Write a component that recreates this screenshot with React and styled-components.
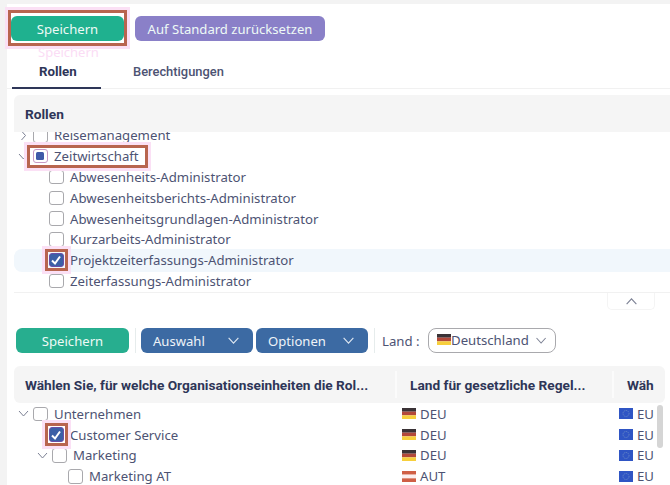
import React from 'react';
import styled, { createGlobalStyle } from 'styled-components';

const Global = createGlobalStyle`
  html, body { margin: 0; padding: 0; background: #f3f3f3; }
  * { box-sizing: border-box; }
`;
const Page = styled.div`
  width: 670px; height: 485px; overflow: hidden; background: #f3f3f3;
  padding: 4px 0 0 7px; font-family: "Noto Sans", sans-serif; font-size: 13.2px; color: #4d5373;
`;
const Panel = styled.div`
  height: 481px; background: #fff; display: flex; flex-direction: column;
`;
const TopBar = styled.div`
  display: flex; gap: 11px; padding: 12px 0 0 4px; height: 37px;
`;
const Button = styled.button`
  height: 25px; width: ${p => p.$w}px; border: 0; border-radius: 6px; padding: 0;
  background: ${p => p.$bg}; color: #eefaf6; font: 13.1px "Noto Sans", sans-serif;
  display: flex; align-items: center; justify-content: center; flex: none;
`;
const Mark = styled.div`
  position: relative; flex: none; display: flex; align-items: center; gap: ${p => p.$gap || 0}px;
  &::after {
    content: ''; position: absolute; inset: ${p => p.$inset};
    border: 3px solid #b8654f; box-shadow: 0 0 0 3px #fbe0f5; pointer-events: none;
  }
`;
const Ghost = styled.div`
  height: 13px; padding: 5px 0 0 31px; font-size: 13px; line-height: 13px; color: #fbdcf5;
`;
const Tabs = styled.div`
  display: flex; height: 31px; margin-top: 4px; border-bottom: 1px solid #f1f1f1; position: relative;
`;
const Tab = styled.div`
  position: relative; flex: none; width: ${p => p.$w}px; padding-left: ${p => p.$pl}px; line-height: 28px;
  margin-left: ${p => p.$ml || 0}px;
  font-family: Roboto, sans-serif; font-weight: ${p => p.$on ? 700 : 500};
  font-size: ${p => p.$on ? 13.3 : 12.9}px; color: ${p => p.$on ? '#2e3658' : '#4d5373'};
  ${p => p.$on && `&::after { content: ''; position: absolute; left: 0; right: 0; bottom: -1px; height: 2px; background: #2e3658; }`}
`;
const RolesBox = styled.div`
  margin: 6px 0 0 7px; display: flex; flex-direction: column; position: relative;
`;
const HeadCell = styled.div`
  height: 37px; background: #f5f5f5; flex: none; position: relative; z-index: 1; border-radius: 6px 0 0 0;
  padding-left: 11px; font: 700 13.7px/39px Roboto, sans-serif; color: #2e3658;
`;
const Tree = styled.div`
  height: 161px; overflow: hidden; border-bottom: 1px solid #f1f1f1;
`;
const TreeInner = styled.div`
  margin-top: -7px;
`;
const Row = styled.div`
  display: flex; align-items: center; height: 20.8px; padding-left: ${p => p.$pl}px; gap: 6.5px;
  white-space: nowrap;
  ${p => p.$hi && 'background: #f1f7fc; box-shadow: 0 -1px 0 #f1f7fc, 0 1px 0 #f1f7fc; border-radius: 8px 0 0 8px;'}
`;
const Caret = styled.svg`
  width: 11px; height: 11px; flex: none; margin-right: -2.5px; fill: none; stroke: #7c8194; stroke-width: 1;
`;
const Box = styled.span`
  width: 14.5px; height: 14.5px; flex: none; border: 1px solid #a9a9ad; border-radius: 3px; background: #fff;
  display: flex; align-items: center; justify-content: center;
  ${p => p.$state === 'checked' && 'background: #3b5fa6; border-color: #6a4fa8;'}
  ${p => p.$state === 'partial' && 'border-color: #c79ac4;'}
`;
const Dot = styled.span`
  width: 8px; height: 8px; border-radius: 1.5px; background: #3f5aa8;
`;
const Collapse = styled.div`
  align-self: flex-end; width: 48px; height: 17px; margin-right: 15px; border: 1px solid #f4f4f4; border-top: 0;
  border-radius: 0 0 5px 5px; display: flex; align-items: center; justify-content: center;
`;
const Toolbar = styled.div`
  display: flex; align-items: center; height: 25px; margin: 18px 0 0 9px;
`;
const Sep = styled.div`
  width: 1px; height: 25px; background: #e6ecec; margin: 0 5px 0 6px; flex: none;
`;
const MenuButton = styled(Button)`
  background: #3c6aa3; color: #eef3f8; justify-content: space-between; padding: 0 13px 0 12px; margin-right: ${p => p.$mr || 0}px;
`;
const LandLabel = styled.span`
  margin: 0 9px 0 2px; width: 37px; flex: none; white-space: nowrap;
`;
const Select = styled.div`
  width: 128px; height: 25px; border: 1px solid #a9a9ad; border-radius: 8px; display: flex; align-items: center;
  padding: 0 8px; gap: 6px; white-space: nowrap; line-height: 20px;
`;
const SelectValue = styled.span`
  display: flex; align-items: center; gap: 0; margin-top: -2px;
`;
const Table = styled.div`
  margin: 13px 0 0 7px; width: 651px; position: relative;
`;
const TableHead = styled.div`
  display: grid; grid-template-columns: 381px 217px 53px; height: 37px; background: #f5f5f5; border-radius: 6px;
`;
const Th = styled.div`
  padding-left: ${p => p.$pl}px; font: 700 13.7px/39px Roboto, sans-serif; color: #2e3658; white-space: nowrap;
  overflow: hidden; position: relative;
  &::before { content: ''; position: absolute; left: 0; top: 5px; bottom: 5px; width: ${p => p.$first ? 0 : 2}px; background: #fbfbfb; }
`;
const Body = styled.div`
  position: relative; height: 82px; overflow: hidden; padding-top: 0.5px;
`;
const TableRow = styled.div`
  display: grid; grid-template-columns: 388px 217px 46px; height: 20.8px; align-items: center;
`;
const TreeCell = styled.div`
  display: flex; align-items: center; gap: 6.5px; padding-left: ${p => p.$pl}px; white-space: nowrap;
`;
const CountryCell = styled.div`
  display: flex; align-items: center; gap: 4px;
`;
const Scrollbar = styled.div`
  position: absolute; right: 2px; top: 2px; width: 6px; height: 43px; border-radius: 3px; background: #d5d5d5;
`;
const FlagSvg = styled.svg`
  width: 14px; height: 11px; flex: none; display: block;
`;

const Chevron = ({ up, color = '#7c8194', size = 13 }) => (
  <svg width={size} height={size} viewBox="0 0 12 12" fill="none" stroke={color} strokeWidth="1">
    <path d={up ? 'M1.5 8.5 6 3.5l4.5 5' : 'M1.5 3.5 6 8.5l4.5-5'} />
  </svg>
);
const CaretIcon = ({ open }) => (
  <Caret viewBox="0 0 11 11">
    <path d={open ? 'M1 3l4.5 5L10 3' : 'M3.5 1l4 4.5-4 4.5'} />
  </Caret>
);
const Check = () => (
  <svg width="12" height="12" viewBox="0 0 12 12" fill="none" stroke="#fff" strokeWidth="2">
    <path d="M2 6.5 5 9.5 10 2.5" />
  </svg>
);
const FLAGS = {
  de: ['#3a3236', '#b3483a', '#f7cf3c'],
  at: ['#cf5f45', '#fbeeee', '#cf5f45'],
};
const Flag = ({ code }) =>
  code === 'eu' ? (
    <FlagSvg viewBox="0 0 14 11">
      <rect width="14" height="11" fill="#2f55c4" />
      <circle cx="7" cy="5.5" r="3" fill="none" stroke="#6f90c8" strokeWidth="1" strokeDasharray="1 1" />
    </FlagSvg>
  ) : (
    <FlagSvg viewBox="0 0 14 11">
      {FLAGS[code].map((c, i) => <rect key={i} y={i * 3.67} width="14" height="3.67" fill={c} />)}
    </FlagSvg>
  );

const OrgRows = [
  { name: 'Unternehmen', pl: 4, caret: true, c: 'de', l: 'DEU' },
  { name: 'Customer Service', pl: 35, checked: true, c: 'de', l: 'DEU' },
  { name: 'Marketing', pl: 23, caret: true, c: 'de', l: 'DEU' },
  { name: 'Marketing AT', pl: 54, c: 'at', l: 'AUT' },
];
const RoleRows = [
  'Abwesenheits-Administrator', 'Abwesenheitsberichts-Administrator', 'Abwesenheitsgrundlagen-Administrator',
  'Kurzarbeits-Administrator', 'Projektzeiterfassungs-Administrator', 'Zeiterfassungs-Administrator',
];

export default function App() {
  return (
    <Page>
      <Global />
      <Panel>
        <TopBar>
          <Mark $inset="-6px -3px -5px -3px">
            <Button $w={113} $bg="#1fb18f">Speichern</Button>
          </Mark>
          <Button $w={190} $bg="#8a80c8">Auf Standard zurücksetzen</Button>
        </TopBar>
        <Ghost>Speichern</Ghost>
        <Tabs>
          <Tab $on $w={89} $pl={27} $ml={5}>Rollen</Tab>
          <Tab $w={120} $pl={32}>Berechtigungen</Tab>
        </Tabs>
        <RolesBox>
          <HeadCell>Rollen</HeadCell>
          <Tree>
            <TreeInner>
              <Row $pl={4}><CaretIcon /><Box /><span>Reisemanagement</span></Row>
              <Row $pl={4}>
                <CaretIcon open />
                <Mark $gap={6.5} $inset="-2px -9px -3px -6px">
                  <Box $state="partial"><Dot /></Box>
                  <span>Zeitwirtschaft</span>
                </Mark>
              </Row>
              {RoleRows.map((r, i) => (
                <Row key={r} $pl={35} $hi={i === 4}>
                  {i === 4
                    ? <Mark $inset="-4px"><Box $state="checked"><Check /></Box></Mark>
                    : <Box />}
                  <span>{r}</span>
                </Row>
              ))}
            </TreeInner>
          </Tree>
          <Collapse><Chevron up /></Collapse>
        </RolesBox>
        <Toolbar>
          <Button $w={113} $bg="#27ae8f">Speichern</Button>
          <Sep />
          <MenuButton $w={112} $mr={3} $bg="#3c6aa3">Auswahl<Chevron color="#dfe8f2" /></MenuButton>
          <MenuButton $w={112} $bg="#3c6aa3">Optionen<Chevron color="#dfe8f2" /></MenuButton>
          <Sep />
          <LandLabel>Land :</LandLabel>
          <Select>
            <SelectValue><Flag code="de" />Deutschland</SelectValue>
            <Chevron />
          </Select>
        </Toolbar>
        <Table>
          <TableHead>
            <Th $first $pl={11}>Wählen Sie, für welche Organisationseinheiten die Rol...</Th>
            <Th $pl={15}>Land für gesetzliche Regel...</Th>
            <Th $pl={15}>Wäh</Th>
          </TableHead>
          <Body>
            {OrgRows.map(r => (
              <TableRow key={r.name}>
                <TreeCell $pl={r.pl}>
                  {r.caret && <CaretIcon open />}
                  {r.checked
                    ? <Mark $inset="-4px"><Box $state="checked"><Check /></Box></Mark>
                    : <Box />}
                  <span>{r.name}</span>
                </TreeCell>
                <CountryCell><Flag code={r.c} />{r.l}</CountryCell>
                <CountryCell><Flag code="eu" />EU</CountryCell>
              </TableRow>
            ))}
            <Scrollbar />
          </Body>
        </Table>
      </Panel>
    </Page>
  );
}
